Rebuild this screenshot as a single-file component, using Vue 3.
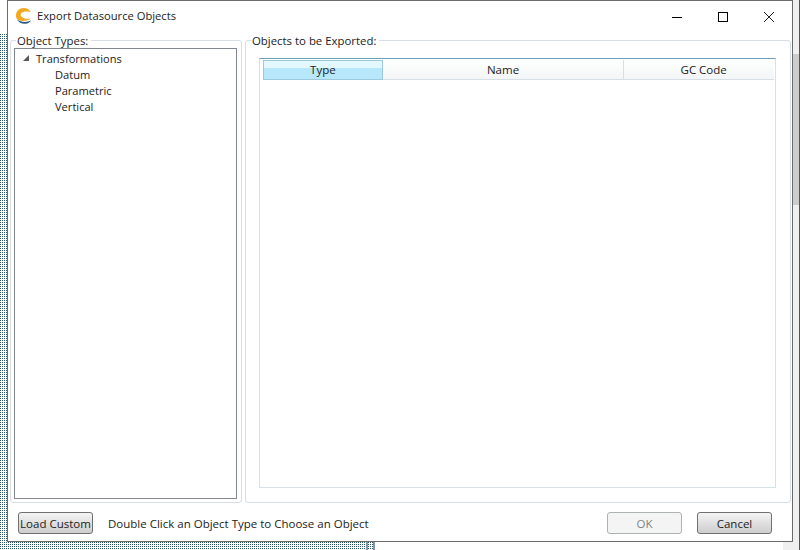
<script setup>
const nodes = ['Datum', 'Parametric', 'Vertical']
const columns = [
  { label: 'Type', width: 120, active: true },
  { label: 'Name', width: 242 },
  { label: 'GC Code', width: 150, last: true },
]
</script>

<template>
  <div class="page">
    <div class="row">
      <div class="left-strip"><div class="dots"></div></div>
      <div class="window">
        <div class="titlebar">
          <svg class="logo" width="18" height="18" viewBox="0 0 18 18">
            <path d="M16 5C14 1.500 9.500 0 5.500 1.500 2 3 .5 6.500 1 10 2 13 5 14 8 14 11 14 14 13 16 11.500 13.500 12 10.500 12 8.500 11 6 10 5 8 6 6.500 7.500 4.500 12 4 16 5Z" fill="#f0a920"/>
            <path d="M2 12.500C4 16 8 17.500 12 16.500 14 16 15.500 14.500 16 13.500 12 15.500 6 15.500 2 12.500Z" fill="#2d5a84"/>
          </svg>
          <span class="title">Export Datasource Objects</span>
          <div class="controls">
            <svg width="16" height="16" viewBox="0 0 16 16"><path d="M3 8.500h10" stroke="#000" fill="none"/></svg>
            <svg width="16" height="16" viewBox="0 0 16 16"><rect x="3.500" y="3.500" width="9" height="9" stroke="#000" fill="none"/></svg>
            <svg width="16" height="16" viewBox="0 0 16 16"><path d="M3 3l10 10M13 3L3 13" stroke="#222" fill="none"/></svg>
          </div>
        </div>

        <div class="panels">
          <fieldset class="group left-group">
            <legend>Object Types:</legend>
            <div class="tree-wrap">
              <div class="tree">
                <div class="tree-root">
                  <span class="arrow"></span>
                  <span>Transformations</span>
                </div>
                <div v-for="n in nodes" :key="n" class="tree-leaf">{{ n }}</div>
              </div>
            </div>
          </fieldset>
          <fieldset class="group right-group">
            <legend>Objects to be Exported:</legend>
            <div class="grid-wrap">
              <div class="grid">
                <div class="grid-head">
                  <div
                    v-for="c in columns"
                    :key="c.label"
                    class="col"
                    :class="{ active: c.active, last: c.last }"
                    :style="{ width: c.width + 'px' }"
                  >{{ c.label }}</div>
                </div>
              </div>
            </div>
          </fieldset>
        </div>

        <div class="footer">
          <button class="btn load">Load Custom</button>
          <span class="hint">Double Click an Object Type to Choose an Object</span>
          <button class="btn ok" disabled>OK</button>
          <button class="btn cancel">Cancel</button>
        </div>
      </div>
      <div class="right-strip"><div class="thumb"></div></div>
    </div>
    <div class="bottom-row">
      <div class="bottom-strip"></div>
      <div class="bottom-gray"></div>
    </div>
  </div>
</template>

<style>
html, body { margin: 0; background: #fff; }
</style>

<style scoped>
.page {
  width: 800px;
  height: 550px;
  overflow: hidden;
  display: flex;
  flex-direction: column;
  font-family: "Open Sans", "Liberation Sans", sans-serif;
  font-size: 11.5px;
  color: #222;
}
.row { display: flex; height: 542px; }
.left-strip { width: 7px; padding-top: 34px; box-sizing: border-box; }
.dots {
  height: 100%;
  background-image: radial-gradient(circle at 0.5px 0.5px, #2c5566 0.7px, transparent 0.8px);
  background-size: 2px 2px;
}
.bottom-row { display: flex; height: 8px; }
.bottom-strip {
  width: 375px;
  height: 8px;
  background-image:
    linear-gradient(90deg, transparent 366px, #7f98ad 366px, #7f98ad 368px, transparent 368px, transparent 373px, #7f98ad 373px, #7f98ad 375px, transparent 375px),
    radial-gradient(circle at 0.5px 0.5px, #2c5566 0.7px, transparent 0.8px);
  background-size: 100% 100%, 2px 2px;
}
.bottom-gray {
  width: 16px;
  box-sizing: border-box;
  margin-left: 408px;
  background: #f0f0f0;
}
.bottom-row::after {
  content: "";
  width: 1px;
  background: #555;
}
.window {
  width: 786px;
  height: 542px;
  box-sizing: border-box;
  border: 1px solid #6b6b6b;
  background: #fff;
  display: flex;
  flex-direction: column;
}
.titlebar {
  height: 31px;
  display: flex;
  align-items: center;
  padding-left: 7px;
  flex-shrink: 0;
}
.logo { margin-right: 4px; margin-bottom: 1px; }
.title { font-size: 11.2px; color: #222; margin-bottom: 2px; }
.controls {
  margin-left: auto;
  display: flex;
  gap: 30px;
  padding-right: 15px;
}
.panels {
  flex: 1;
  display: flex;
  gap: 3px;
  padding: 0 1px 0 2px;
  min-height: 0;
}
.group {
  margin: 0;
  padding: 0;
  border: 1px solid #d5dfe5;
  border-radius: 3px;
  min-width: 0;
  box-sizing: border-box;
}
.group legend {
  padding: 0 3px 0 1px;
  margin-left: 5px;
  font-size: 11.4px;
  line-height: 17px;
}
.left-group { width: 232px; }
.right-group { flex: 1; }
.tree-wrap { height: calc(100% + 2px); box-sizing: border-box; padding: 0 4px 4px 3px; margin-top: -1px; }
.grid-wrap { height: 100%; box-sizing: border-box; padding: 9px 0 14px 13px; }
.tree {
  height: 100%;
  box-sizing: border-box;
  border: 1px solid #828790;
  padding: 1px 0 0 7px;
  font-size: 11.1px;
}
.tree-root { display: flex; align-items: center; height: 16px; margin-bottom: 1px; }
.arrow {
  width: 0;
  height: 0;
  margin: 0 7px 0 1px;
  border-left: 6px solid transparent;
  border-bottom: 6px solid #595959;
}
.tree-leaf { height: 16px; line-height: 16px; padding-left: 33px; }
.grid {
  width: 517px;
  height: 100%;
  box-sizing: border-box;
  border: 1px solid #d5e3e8;
  border-top-color: #6f9eb8;
  padding: 0 1px 0 3px;
}
.grid-head {
  display: flex;
  height: 21px;
  box-sizing: border-box;
  padding-top: 1px;
  border-bottom: 1px solid #d5dfe5;
  background: linear-gradient(#fff 0%, #f3f5f6 100%);
}
.col {
  box-sizing: border-box;
  text-align: center;
  line-height: 20px;
  border-right: 1px solid #d5dfe5;
}
.col.last { border-right: 0; padding-left: 9px; }
.col.active {
  height: 20px;
  line-height: 18px;
  background: linear-gradient(#e3f7ff 0%, #e3f7ff 40%, #b7e7fb 40%, #b7e7fb 100%);
  border: 1px solid #9cc9de;
}
.footer {
  height: 38px;
  display: flex;
  align-items: flex-start;
  padding: 9px 20px 0 10px;
  box-sizing: border-box;
  flex-shrink: 0;
}
.btn {
  height: 22px;
  box-sizing: border-box;
  border: 1px solid #707070;
  border-radius: 3px;
  background: linear-gradient(#f4f4f4 0%, #dcdcdc 60%, #cdcdcd 100%);
  font: inherit;
  color: #222;
  padding: 0;
  white-space: nowrap;
}
.load { width: 75px; }
.hint { margin-left: 15px; line-height: 23px; }
.ok {
  margin-left: auto;
  width: 75px;
  background: #f4f4f4;
  border-color: #adb2b5;
  color: #838383;
}
.cancel { width: 75px; margin-left: 15px; }
.right-strip {
  width: 7px;
  padding-top: 54px;
  box-sizing: border-box;
  background: #f0f0f0;
  border-right: 1px solid #555;
}
.thumb { width: 6px; height: 151px; background: #cdcdcd; }
</style>
